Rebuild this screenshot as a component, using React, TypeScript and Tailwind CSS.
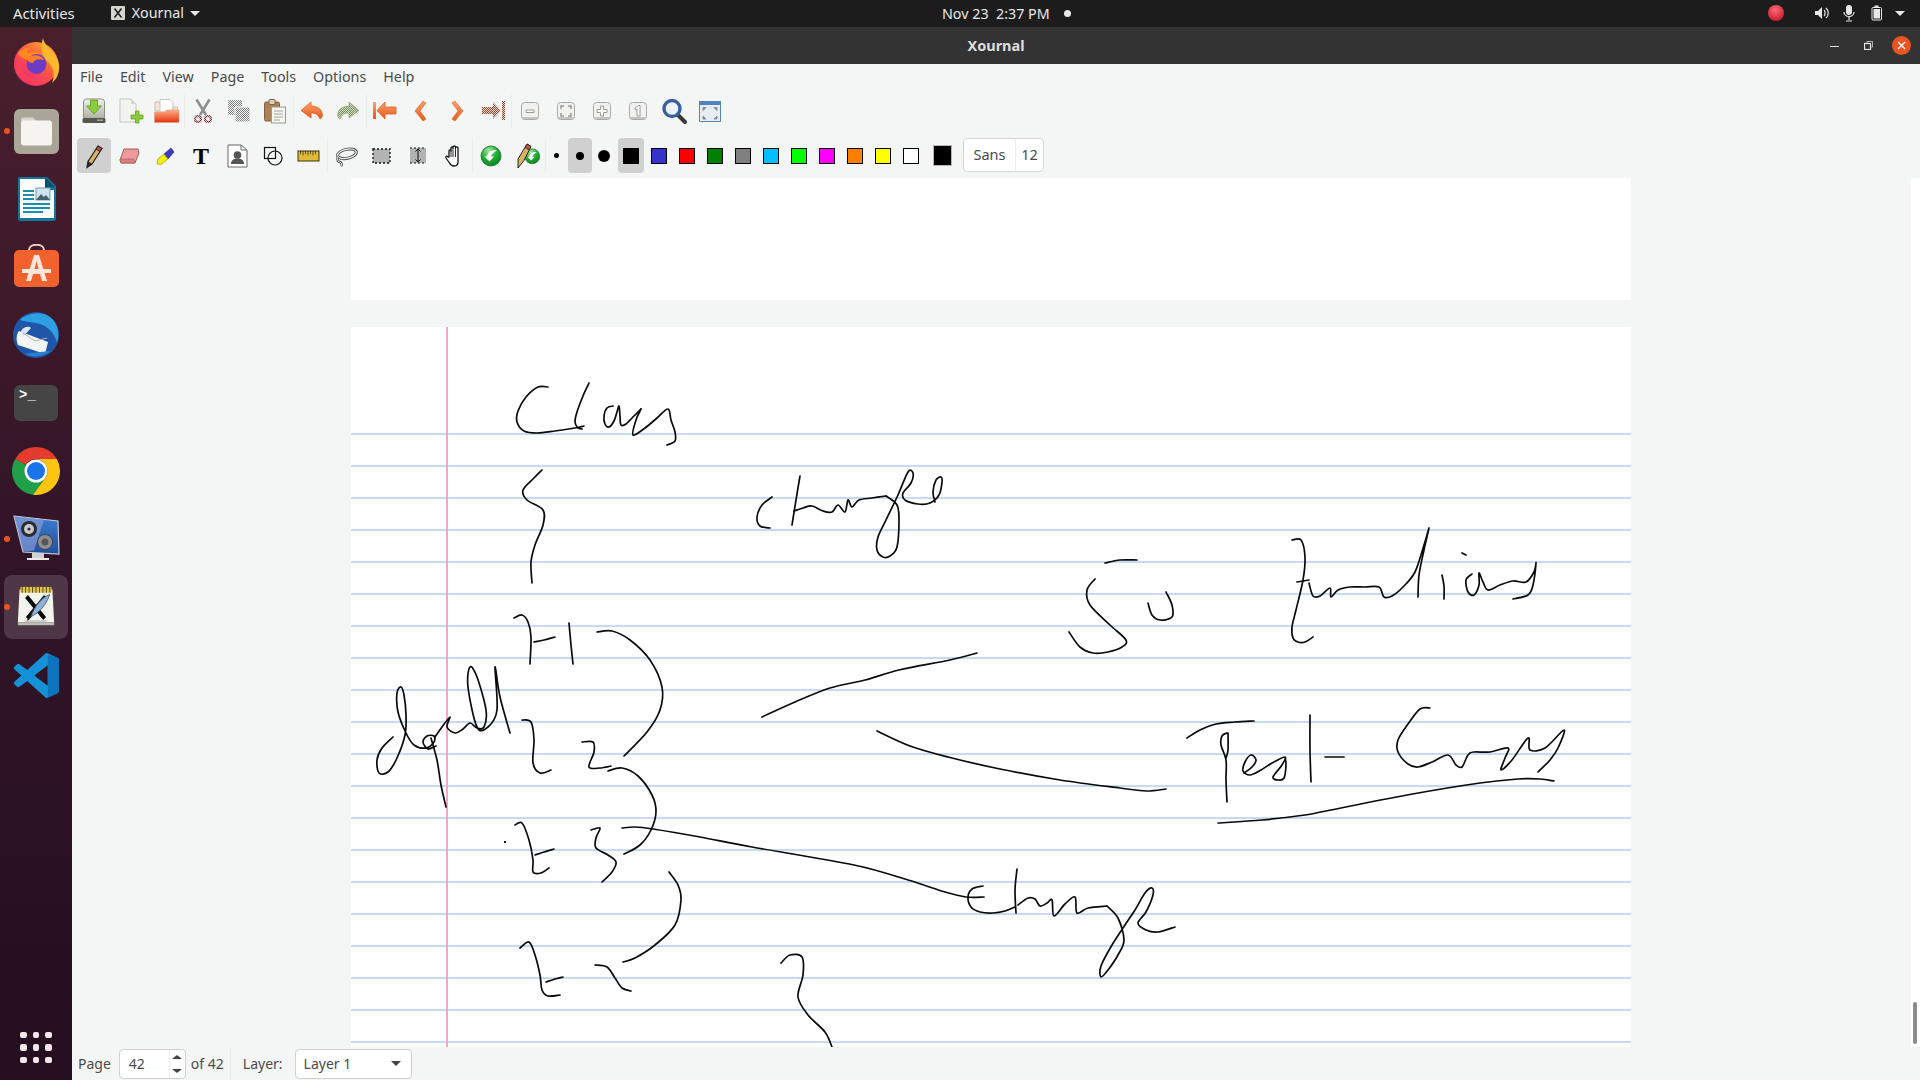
import type { ReactNode } from "react"

// handwriting: each stroke is a list of points in screen coordinates
const strokes = [
  // Class
  "548,387 538,387 526,397 518,411 517,422 524,431 537,433 555,431 575,428 584,426",
  "589,383 583,396 577,412 575,422 578,428 582,429",
  "613,406 607,408 604,416 605,424 609,427 614,421 617,412 619,406 620,416 621,425 626,424 634,416 641,409",
  "641,409 636,420 633,435 645,428 657,418 668,409 671,420 675,432 675,441 667,445",
  // {
  "542,470 534,478 523,490 527,500 543,510 543,525 535,545 531,562 532,583",
  // changes
  "772,497 762,505 757,517 760,526 770,528",
  "800,476 796,500 792,525",
  "794,511 803,508 812,506 823,511 832,512 838,505 845,512 848,500 852,507 859,500 872,498 886,496",
  "886,496 897,505 899,520 897,547 890,556 883,557 877,550 878,537 886,520 898,495 908,472 913,473 911,483 903,493 905,500 918,504 930,503 939,495 942,482 941,477 936,480 933,492 935,502",
  // f1
  "514,618 522,615 528,622 531,637 530,664",
  "534,642 544,640 555,637",
  "569,623 571,645 573,664",
  "597,632 612,631 630,640 650,660 662,687 660,710 647,732 624,756",
  // depend
  "393,737 382,748 377,760 379,773 388,772 397,758 405,735 406,715 404,695 401,687 397,693 398,712 406,733 414,745 426,748 434,742 434,736 427,736 423,742 428,749 436,746",
  "431,738 437,760 441,785 446,807",
  "435,737 442,727 450,717 447,727 455,733 463,729 470,723 477,728 484,727 486,710 477,677 470,667 468,687 477,727 488,727 497,710 495,667 500,697 510,733",
  // f2
  "522,720 531,722 534,740 533,763 540,773 551,770",
  "582,742 593,742 594,752 589,767 600,768 611,766",
  "608,771 622,768 638,776 652,795 656,812 651,830 640,845 624,854",
  // f3
  "515,825 522,823 529,840 533,860 533,872 541,873 549,868",
  "535,855 544,852 554,849",
  "591,830 600,828 596,838 596,848 608,855 616,862 612,872 602,882",
  "622,828 635,827 653,829 700,837 752,847 854,865 908,880 945,892 966,897 984,897",
  "669,872 678,885 681,900 675,925 655,945 635,958 623,962",
  // f4
  "520,948 529,942 535,955 540,975 542,990 548,996 560,995",
  "546,982 555,979 563,977",
  "595,965 607,967 615,978 622,988 631,991",
  // lower brace
  "781,963 790,955 802,957 803,975 798,997 808,1015 825,1032 832,1047",
  // connecting lines
  "762,717 795,702 830,688 865,680 899,670 950,660 977,653",
  "877,731 910,746 948,757 1000,769 1060,780 1120,788 1146,791 1166,789",
  // S u
  "1105,563 1120,560 1137,560",
  "1095,579 1087,590 1090,605 1110,625 1126,640 1122,647 1108,652 1093,653 1080,647 1069,632",
  "1148,603 1152,615 1160,620 1172,617 1172,605 1166,592",
  // function
  "1292,540 1301,540 1305,557 1303,580 1296,610 1292,627 1293,638 1298,642 1305,642 1313,637",
  "1297,582 1309,580",
  "1309,583 1313,596 1320,596 1330,588 1331,597 1338,590 1350,587 1365,587 1379,587 1384,597 1392,596 1403,587 1415,572 1424,545 1429,528 1424,550 1419,575 1418,597",
  "1442,575 1444,586 1444,599",
  "1462,553 1466,555",
  "1472,574 1466,580 1468,592 1474,595 1479,585 1479,573 1483,582 1488,590 1500,585 1513,581 1526,582 1534,572 1536,563 1533,585 1528,595 1513,599",
  // Test - Copy
  "1187,738 1200,730 1216,724 1235,722 1254,721",
  "1227,733 1222,736 1221,745 1226,760 1226,780 1227,802",
  "1228,733 1228,750 1226,758",
  "1244,773 1252,767 1256,760 1251,755 1245,762 1243,771 1250,775 1261,770 1272,763 1285,757 1282,765 1273,777 1278,780 1284,778 1286,765 1285,757",
  "1310,715 1310,750 1311,782",
  "1325,757 1344,757",
  "1430,708 1420,709 1408,724 1398,740 1398,752 1408,764 1418,767 1432,762 1448,755 1456,765 1462,767 1468,755 1474,752 1490,752 1508,748 1505,758 1501,770 1512,760 1528,738 1530,750 1545,748 1564,730 1558,748 1550,760 1538,772",
  "1218,823 1262,820 1305,815 1326,811 1407,795 1480,783 1518,779 1540,779 1554,781",
  // change
  "983,886 972,889 968,897 971,907 980,912 993,913 1005,911 1015,907",
  "1017,869 1015,890 1016,913",
  "1018,905 1028,898 1035,899 1040,906 1047,903 1052,900 1054,916 1065,904 1075,897 1077,913 1088,908 1107,906",
  "1107,906 1118,918 1124,940 1118,955 1108,970 1101,977 1101,966 1112,945 1125,925 1135,910 1145,893 1152,888 1153,895 1146,912 1138,923 1146,930 1158,932 1175,927",
]

function toPath(s: string) {
  const p = s.split(" ").map((q) => q.split(",").map(Number))
  let d = `M${p[0][0]} ${p[0][1]}`
  for (let i = 0; i < p.length - 1; i++) {
    const a = p[Math.max(i - 1, 0)]
    const b = p[i]
    const c = p[i + 1]
    const e = p[Math.min(i + 2, p.length - 1)]
    d += ` C${b[0] + (c[0] - a[0]) / 6} ${b[1] + (c[1] - a[1]) / 6} ${c[0] - (e[0] - b[0]) / 6} ${c[1] - (e[1] - b[1]) / 6} ${c[0]} ${c[1]}`
  }
  return d
}

const ruledLines = Array.from({ length: 20 }, (_, i) => 434 + i * 32)

function Page() {
  return (
    <div className="relative w-[1280px] h-[720px] bg-white shrink-0">
      <svg className="absolute inset-0" width="1280" height="720" viewBox="351 327 1280 720">
        {ruledLines.map((y) => (
          <line key={y} x1="351" x2="1631" y1={y} y2={y} stroke="#c6dbf0" strokeWidth="2" />
        ))}
        <line x1="447" x2="447" y1="327" y2="1047" stroke="#efa9c9" strokeWidth="2" />
        {strokes.map((s, i) => (
          <path key={i} d={toPath(s)} fill="none" stroke="#0a0a0a" strokeWidth="1.7" strokeLinecap="round" strokeLinejoin="round" />
        ))}
        <rect x="504" y="841" width="2" height="2" fill="#111" />
      </svg>
    </div>
  )
}

/* ---------- toolbar icons ---------- */

function Defs() {
  return (
    <svg width="0" height="0" className="absolute">
      <defs>
        <pattern id="dither" width="2" height="2" patternUnits="userSpaceOnUse">
          <rect width="2" height="2" fill="#fff" />
          <rect width="1" height="1" fill="#7d7d7d" />
          <rect x="1" y="1" width="1" height="1" fill="#7d7d7d" />
        </pattern>
        <pattern id="ditherBrown" width="2" height="2" patternUnits="userSpaceOnUse">
          <rect width="2" height="2" fill="#e8d9d0" />
          <rect width="1" height="1" fill="#8a4a32" />
          <rect x="1" y="1" width="1" height="1" fill="#8a4a32" />
        </pattern>
        <pattern id="ditherGreen" width="2" height="2" patternUnits="userSpaceOnUse">
          <rect width="2" height="2" fill="#cfd8bd" />
          <rect width="1" height="1" fill="#7d9464" />
          <rect x="1" y="1" width="1" height="1" fill="#7d9464" />
        </pattern>
        <pattern id="ditherRed" width="2" height="2" patternUnits="userSpaceOnUse">
          <rect width="2" height="2" fill="#ddc4c6" />
          <rect width="1" height="1" fill="#8a2f3a" />
          <rect x="1" y="1" width="1" height="1" fill="#8a2f3a" />
        </pattern>
        <linearGradient id="orangeArrow" x1="0" y1="0" x2="0" y2="1">
          <stop offset="0" stopColor="#fba36a" />
          <stop offset="1" stopColor="#e8581c" />
        </linearGradient>
        <linearGradient id="redFolder" x1="0" y1="0" x2="0" y2="1">
          <stop offset="0" stopColor="#ffb084" />
          <stop offset="1" stopColor="#e4300f" />
        </linearGradient>
        <linearGradient id="disk" x1="0" y1="0" x2="0" y2="1">
          <stop offset="0" stopColor="#f1f1ec" />
          <stop offset="1" stopColor="#a9aca2" />
        </linearGradient>
        <radialGradient id="greenBall" cx="0.4" cy="0.25" r="0.85">
          <stop offset="0" stopColor="#a5eba5" />
          <stop offset="0.45" stopColor="#28b03a" />
          <stop offset="1" stopColor="#06741a" />
        </radialGradient>
        <radialGradient id="redBall" cx="0.45" cy="0.3" r="0.8">
          <stop offset="0" stopColor="#ff6b70" />
          <stop offset="1" stopColor="#c4122c" />
        </radialGradient>
        <linearGradient id="ffBody" x1="1" y1="0" x2="0.2" y2="1">
          <stop offset="0" stopColor="#ffbd2e" />
          <stop offset="0.5" stopColor="#ff5a3c" />
          <stop offset="1" stopColor="#e91e8c" />
        </linearGradient>
        <linearGradient id="dock" x1="0" y1="0" x2="0" y2="1">
          <stop offset="0" stopColor="#3f7fd0" />
          <stop offset="1" stopColor="#1e4f9f" />
        </linearGradient>
      </defs>
    </svg>
  )
}

const box = "w-[26px] h-[26px]"

function Save() {
  return (
    <svg className="w-[28px] h-[28px]" viewBox="0 0 28 28">
      <rect x="3.500" y="2" width="21" height="21" rx="3" fill="url(#disk)" stroke="#8d8f88" />
      <rect x="2.500" y="21" width="23" height="5" rx="1.500" fill="#55564f" />
      <rect x="17" y="22.500" width="6" height="1.400" fill="#a9ad9f" />
      <path d="M10.500 3h7v6h4L14 17 6.500 9h4z" fill="#8ccb3c" stroke="#5b9a1c" strokeWidth="0.8" />
    </svg>
  )
}

function NewDoc() {
  return (
    <svg className="w-[28px] h-[28px]" viewBox="0 0 28 28">
      <path d="M4 2h11l5 5v18H4z" fill="#f3f3f0" stroke="#c6c6c1" />
      <path d="M15 2v5h5z" fill="#d8d8d3" />
      <path d="M15 15h4.500v-4h3.500v4H27v4h-4v4h-3.500v-4H15z" transform="translate(0 3)" fill="#8ccb3c" stroke="#5b9a1c" strokeWidth="0.7" />
    </svg>
  )
}

function OpenDoc() {
  return (
    <svg className="w-[28px] h-[28px]" viewBox="0 0 28 28">
      <path d="M3 5h7l1 1v8H3z" fill="#f0e4d4" stroke="#c9b9a4" />
      <path d="M8 2.500h10l3 3V15H8z" fill="#fff" stroke="#c6c6c1" />
      <path d="M21 10h4.500v6H21z" fill="#f0dccb" stroke="#cdb39e" strokeWidth="0.6" />
      <path d="M2.500 25.500V15h10l2-2h12.500v12.500z" fill="url(#redFolder)" stroke="#d9a48a" strokeWidth="0.6" />
    </svg>
  )
}

function Cut() {
  return (
    <svg className={box} viewBox="0 0 26 26" fill="none">
      <path d="M6.500 1.500 16 17M19.500 1.500 10 17" stroke="#8f8f8f" strokeWidth="2.600" />
      <circle cx="8" cy="21" r="3" stroke="url(#ditherRed)" strokeWidth="2.200" />
      <circle cx="18" cy="21" r="3" stroke="url(#ditherRed)" strokeWidth="2.200" />
    </svg>
  )
}

function Copy() {
  return (
    <svg className={box} viewBox="0 0 26 26">
      <rect x="2" y="2" width="14" height="15" rx="1" fill="url(#dither)" />
      <rect x="9" y="9" width="15" height="15" rx="1" fill="url(#dither)" stroke="#f4f6f6" />
    </svg>
  )
}

function Paste() {
  return (
    <svg className={box} viewBox="0 0 26 26">
      <rect x="2.500" y="4" width="15" height="19" rx="1.500" fill="#ab8258" stroke="#83603f" />
      <rect x="7" y="1.500" width="6" height="5" rx="1" fill="#d6d3c8" stroke="#83603f" />
      <rect x="9.500" y="9" width="14" height="16" fill="#f5f5f2" stroke="#9a9a94" />
      <path d="M12 13h9M12 16h9M12 19h9M12 22h6" stroke="#a4a4a0" />
    </svg>
  )
}

const undoPath = "M12 3 2 11.500 12 19v-5c5 0 7 2 9 6 2-1 3-3 2-6-1-5-6-7-11-7z"

function Undo({ off }: { off?: boolean }) {
  return (
    <svg className={box} viewBox="0 0 26 24" style={off ? { transform: "scaleX(-1)" } : undefined}>
      <path d={undoPath} fill={off ? "url(#ditherGreen)" : "url(#orangeArrow)"} stroke={off ? "#9aac82" : "#d9632a"} strokeWidth="0.8" />
    </svg>
  )
}

function First() {
  return (
    <svg className={box} viewBox="0 0 26 24">
      <path d="M1 3h3v17H1z" fill="url(#orangeArrow)" />
      <path d="M13 3 5 11.500 13 20v-5h11V8H13z" fill="url(#orangeArrow)" stroke="#d9632a" strokeWidth="0.8" />
    </svg>
  )
}

function Last() {
  return (
    <svg className={box} viewBox="0 0 26 24">
      <path d="M22 2h3v19h-3z" fill="url(#ditherBrown)" />
      <path d="M13 3l8 8.500L13 20v-5H2V8h11z" fill="url(#ditherBrown)" />
    </svg>
  )
}

function Chevron({ left }: { left?: boolean }) {
  return (
    <svg className={box} viewBox="0 0 26 24" style={left ? undefined : { transform: "scaleX(-1)" }}>
      <path d="M15 2 7 12l8 10 3-2-6-8 6-8z" fill="url(#orangeArrow)" stroke="#d9632a" strokeWidth="0.6" />
    </svg>
  )
}

function ZoomBox({ children }: { children: ReactNode }) {
  return (
    <svg className={box} viewBox="0 0 26 26">
      <rect x="4.500" y="4.500" width="17" height="17" rx="3" fill="#f1f1f0" stroke="#a8a8a6" />
      <path d="M5 20h16" stroke="#c4c4c2" strokeWidth="2" />
      {children}
    </svg>
  )
}

function Magnifier() {
  return (
    <svg className="w-[28px] h-[28px]" viewBox="0 0 28 28">
      <path d="M18 18l7 7" stroke="#3a3a3a" strokeWidth="4" strokeLinecap="round" />
      <circle cx="12" cy="11.500" r="8" fill="#eef3fa" stroke="#3a5f9f" strokeWidth="3.400" />
    </svg>
  )
}

function Fullscreen() {
  return (
    <svg className="w-[26px] h-[26px]" viewBox="0 0 26 26">
      <rect x="2.500" y="3.500" width="21" height="20" fill="#e6edf5" stroke="#5b84b8" />
      <rect x="2.500" y="3.500" width="21" height="3.500" fill="#4f82c4" />
      <path d="M6 9.500h3l-3 3zM20 9.500h-3l3 3zM6 21h3l-3-3zM20 21h-3l3-3z" fill="#8d8d8d" stroke="#8d8d8d" />
    </svg>
  )
}

function Pen() {
  return (
    <svg className={box} viewBox="0 0 26 26">
      <path d="M17 3l4 2.500-10 15.500-5 3.500 1-6z" fill="#d9b35f" stroke="#222" strokeWidth="1.200" />
      <path d="M17 3l4 2.500-2 3-4-2.500z" fill="#c0504d" stroke="#222" strokeWidth="1" />
      <path d="M7 18l4 3-5 3.500z" fill="#222" />
    </svg>
  )
}

function Eraser() {
  return (
    <svg className={box} viewBox="0 0 26 26">
      <path d="M8 6h14l1 4-4 10H5l-1-3z" fill="#ee9a9d" stroke="#98605f" />
      <path d="M4 16h13.500L19 20H5z" fill="#dc7d80" stroke="#98605f" strokeWidth="0.6" />
    </svg>
  )
}

function Highlighter() {
  return (
    <svg className={box} viewBox="0 0 26 26">
      <path d="M12 11l7-6 3 4-6 7z" fill="#3c3cc4" stroke="#22227a" strokeWidth="0.6" />
      <path d="M12 11l4 5-7 5.500-4-.5 1-5z" fill="#f5f200" stroke="#8a8a10" strokeWidth="0.6" />
    </svg>
  )
}

function ImageTool() {
  return (
    <svg className="w-[24px] h-[26px]" viewBox="0 0 24 26">
      <path d="M3 2h13l6 5v17H3z" fill="#fff" stroke="#666" />
      <path d="M16 2v5h6" fill="none" stroke="#666" />
      <circle cx="12.500" cy="12" r="3.800" fill="#555" />
      <path d="M6 21c0-4 3-5.500 6.500-5.500S19 17 19 21z" fill="#555" />
    </svg>
  )
}

function Shapes() {
  return (
    <svg className={box} viewBox="0 0 26 26" fill="none" stroke="#111" strokeWidth="1.200">
      <rect x="4.500" y="4.500" width="11" height="11" />
      <circle cx="15" cy="15" r="7" />
    </svg>
  )
}

function Ruler() {
  return (
    <svg className="w-[24px] h-[26px]" viewBox="0 0 24 26">
      <rect x="1" y="8" width="21" height="10" fill="#dfb93b" stroke="#3d3412" />
      <path d="M3.500 8v3M6 8v4.500M8.500 8v3M11 8v4.500M13.500 8v3M16 8v4.500M18.500 8v3" stroke="#3d3412" strokeWidth="0.8" />
    </svg>
  )
}

function Lasso() {
  return (
    <svg className={box} viewBox="0 0 26 26" fill="none">
      <g transform="rotate(-12 13 11)">
        <ellipse cx="14" cy="11" rx="9.500" ry="4.500" stroke="#4d4d4d" strokeWidth="3" />
        <ellipse cx="14" cy="11" rx="9.500" ry="4.500" stroke="#eeeeee" strokeWidth="1.200" />
      </g>
      <path d="M5 14c-1 3 0 5 2 5 2 1 2 3 1 4" stroke="#4d4d4d" strokeWidth="2.600" />
      <path d="M5 14c-1 3 0 5 2 5 2 1 2 3 1 4" stroke="#eeeeee" strokeWidth="1" />
    </svg>
  )
}

function RectSelect() {
  return (
    <svg className={box} viewBox="0 0 26 26">
      <rect x="4" y="6" width="17" height="14" fill="#b3b3b3" stroke="#111" strokeWidth="1.300" strokeDasharray="2 2" />
    </svg>
  )
}

function VerticalSpace() {
  return (
    <svg className={box} viewBox="0 0 26 26">
      <rect x="5" y="5" width="16" height="15" fill="#b3b3b3" />
      <path d="M5 5h16M5 20h16" stroke="#111" strokeWidth="1.200" strokeDasharray="2 2" />
      <path d="M13 6v13M10.500 8.500 13 6l2.500 2.500M10.500 16.500 13 19l2.500-2.500" fill="none" stroke="#111" strokeWidth="1" />
    </svg>
  )
}

function Hand() {
  return (
    <svg className={box} viewBox="0 0 26 26">
      <path d="M8 14V8c0-1.500 2-1.500 2 0V5c0-1.500 2-1.500 2 0V4c0-1.500 2.500-1.500 2.500 0v1c0-1.500 2.500-1.500 2.500 0v14c0 2-1 4-4 4-2 0-3.500-1-4.500-3L5 15c-.6-1.500 1-2.500 2-1z" fill="#fff" stroke="#111" strokeWidth="1.300" strokeLinejoin="round" />
      <path d="M10 8v6M12 5v9M14.500 5v9" stroke="#111" strokeWidth="0.9" />
    </svg>
  )
}

function GreenRefresh() {
  return (
    <>
      <circle cx="13" cy="13" r="10" fill="url(#greenBall)" stroke="#0b7a1d" strokeWidth="0.8" />
      <path d="M19 7.500C14 6.500 9.500 9 9 13.500H6.500l5 5 4.500-5h-3c.5-2.500 2.500-4.500 6-6z" fill="#fff" />
    </>
  )
}

function Refresh() {
  return (
    <svg className={box} viewBox="0 0 26 26">
      <GreenRefresh />
    </svg>
  )
}

function PenRefresh() {
  return (
    <svg className={box} viewBox="0 0 26 26">
      <g transform="translate(8.500 3.500) scale(0.75)">
        <GreenRefresh />
      </g>
      <path d="M13 1l4 2.500-7 14-6 7.500 0-9z" fill="#d9b35f" stroke="#222" />
      <path d="M13 1l4 2.500-2 3.500-4-2.500z" fill="#c0504d" stroke="#222" strokeWidth="0.7" />
    </svg>
  )
}

const btn = "w-9 h-[35px] flex items-center justify-center shrink-0"
const sep = "w-px h-[35px] bg-[#eceeee] shrink-0"

const swatches = ["#3333cc", "#ff0000", "#008000", "#808080", "#00c0ff", "#00ff00", "#ff00ff", "#ff8000", "#ffff00", "#ffffff"]

function Toolbars() {
  return (
    <>
      <div className="h-[42px] flex items-center pl-1 pt-[4px]">
        <div className={btn}><Save /></div>
        <div className={btn}><NewDoc /></div>
        <div className={btn}><OpenDoc /></div>
        <div className={sep} />
        <div className={btn}><Cut /></div>
        <div className={btn}><Copy /></div>
        <div className={btn}><Paste /></div>
        <div className={sep} />
        <div className={btn}><Undo /></div>
        <div className={btn}><Undo off /></div>
        <div className={sep} />
        <div className={btn}><First /></div>
        <div className={btn}><Chevron left /></div>
        <div className={btn}><Chevron /></div>
        <div className={btn}><Last /></div>
        <div className={sep} />
        <div className={btn}>
          <ZoomBox><path d="M9 12h8v2.500H9z" fill="#fff" stroke="#9a9a98" /></ZoomBox>
        </div>
        <div className={btn}>
          <ZoomBox>
            <path d="M8 11V8h3M15 8h3v3M18 15v3h-3M11 18H8v-3" fill="none" stroke="#9a9a98" strokeWidth="1.500" />
          </ZoomBox>
        </div>
        <div className={btn}>
          <ZoomBox><path d="M11.500 8h3v3.500H18v3h-3.500V18h-3v-3.500H8v-3h3.500z" fill="#fff" stroke="#9a9a98" /></ZoomBox>
        </div>
        <div className={btn}>
          <ZoomBox><path d="M10 10l3.500-2.500h1.500V18h-3v-7l-1.500 1z" fill="#fff" stroke="#9a9a98" /></ZoomBox>
        </div>
        <div className={btn}><Magnifier /></div>
        <div className={btn}><Fullscreen /></div>
      </div>

      <div className="h-[48px] flex items-start pt-2 pl-[3px]">
        <div className="w-[34px] h-[35px] ml-[2px] mr-0 flex items-center justify-center shrink-0 bg-[#d0d0d0] rounded"><Pen /></div>
        <div className={btn}><Eraser /></div>
        <div className={btn}><Highlighter /></div>
        <div className={`${btn} [font-family:'Liberation_Serif',serif] font-bold text-[24px] text-black`}>T</div>
        <div className={btn}><ImageTool /></div>
        <div className={btn}><Shapes /></div>
        <div className={btn}><Ruler /></div>
        <div className={sep} />
        <div className={btn}><Lasso /></div>
        <div className={btn}><RectSelect /></div>
        <div className={btn}><VerticalSpace /></div>
        <div className={btn}><Hand /></div>
        <div className={sep} />
        <div className={btn}><Refresh /></div>
        <div className={btn}><PenRefresh /></div>
        <div className={sep} />
        <div className="w-[24px] h-[35px] flex items-center justify-center -ml-[2px]">
          <span className="w-[5px] h-[5px] rounded-full bg-black" />
        </div>
        <div className="w-[24px] h-[35px] flex items-center justify-center bg-[#d0d0d0] rounded">
          <span className="w-[8px] h-[8px] rounded-full bg-black" />
        </div>
        <div className="w-[24px] h-[35px] flex items-center justify-center">
          <span className="w-[12px] h-[12px] rounded-full bg-black" />
        </div>
        <div className="w-[26px] h-[35px] ml-[2px] mr-px flex items-center justify-center bg-[#d0d0d0] rounded">
          <span className="w-4 h-4 bg-black" />
        </div>
        {swatches.map((c) => (
          <div key={c} className="w-[28px] h-[35px] flex items-center justify-center">
            <span className="w-4 h-4 border border-black" style={{ backgroundColor: c }} />
          </div>
        ))}
        <div className="w-[34px] h-[35px] flex items-center justify-center">
          <span className="w-[19px] h-[21px] bg-black border border-[#b9b9b9]" />
        </div>
        <div className="ml-[4px] w-[81px] h-[34px] flex items-center bg-white border border-[#d6d8d8] rounded text-[#4a4a4a] text-[14.500px]">
          <span className="w-[52px] h-full flex items-center justify-center border-r border-[#eeeeee]">Sans</span>
          <span className="flex-1 text-center">12</span>
        </div>
      </div>
    </>
  )
}

/* ---------- dock ---------- */

function Firefox() {
  return (
    <svg className="w-[48px] h-[48px] -translate-y-[1px]" viewBox="0 0 48 48">
      <circle cx="24" cy="26" r="22" fill="url(#ffBody)" />
      <path d="M31 0c1 8 11 13 15 22 3 9 0 18-6 23 3-8 2-15-4-21-6-5-8-15-5-24z" fill="#ffb92e" />
      <path d="M6 16c3-5 7-6 11-6-2 2-2 4-1 5 4-2 10-1 13 2l-8 5c-5 1-10-1-15-6z" fill="#ff8a1e" />
      <circle cx="24.500" cy="26" r="10" fill="#6d3cc4" />
      <path d="M14 20c5-3 14-5 18 2-6-2-10 0-11 3-3 0-6-2-7-5z" fill="#ff7b24" />
      <path d="M2 25c0 12 10 22 22 22 8 0 15-5 18-11-5 5-13 7-20 5-8-2-13-8-13-15-2 1-5 0-7-1z" fill="#ff4b45" opacity="0.55" />
    </svg>
  )
}

function Files() {
  return (
    <svg className="w-[45px] h-[45px]" viewBox="0 0 45 45">
      <rect width="45" height="45" rx="6" fill="#aba597" />
      <path d="M7 11c0-1.500 1-2.500 2.500-2.500H19l3.500 3.500H7z" fill="#d8d5cc" />
      <path d="M7 14c0-1.500 1-2.500 2.500-2.500h26c1.500 0 2.500 1 2.500 2.500v20c0 1.500-1 2.500-2.500 2.500h-26C8 36.500 7 35.500 7 34z" fill="#f6f4f0" />
    </svg>
  )
}

function Writer() {
  return (
    <svg className="w-[46px] h-[46px]" viewBox="2 0 46 46">
      <path d="M7 3c0-1.500 1-2 2-2h27l9 9v32c0 2-1 3-3 3H9c-1 0-2-1-2-3z" fill="#12769c" />
      <path d="M9 3h25v11h9v28H9z" fill="#fff" />
      <path d="M34 1l10 10-10 .500z" fill="#0f4f6e" />
      <path d="M12 15h11M12 19h11M12 23h11M12 28h27M12 32h27M12 36h20" stroke="#1b8cb0" strokeWidth="2.200" />
      <rect x="25" y="12" width="14" height="12" fill="#cfe3ee" stroke="#6b9fb5" />
      <path d="M25 24l5-6 3 3 2-2 4 5z" fill="#47606e" />
    </svg>
  )
}

function Software() {
  return (
    <svg className="w-[45px] h-[43px] -translate-y-[2px]" viewBox="0 0 45 43">
      <path d="M15 7V6c0-7 15-7 15 0v1" fill="none" stroke="#f6d1bd" strokeWidth="2" />
      <rect y="6" width="45" height="37" rx="5" fill="#f2622e" />
      <path d="M20 11h5l8 26h-5l-2-7h-7l-2 7h-5z" fill="#fbe4d8" />
      <rect x="8" y="25" width="29" height="4" fill="#fbe4d8" />
      <path d="M22.500 17l-2 8h4z" fill="#f2622e" />
    </svg>
  )
}

function Thunderbird() {
  return (
    <svg className="w-[50px] h-[48px]" viewBox="0 0 50 48">
      <circle cx="25" cy="24" r="23" fill="#1f56a8" />
      <path d="M9 9c6-6 20-10 30-3 8 6 10 17 7 26-2-9-8-16-17-19-7-2-14-2-20-4z" fill="#2f9fe4" />
      <path d="M8 20l29 11-3 12-27-9c-2-5-2-10 1-14z" fill="#f4f4f6" />
      <path d="M10 20c3-5 8-5 10-3l-8 9z" fill="#dfe3ea" />
      <path d="M12 22l12 8 12-3" fill="none" stroke="#aeb4c0" strokeWidth="1" />
      <path d="M14 43c8 4 18 3 26-3-8 1-16 1-26 3z" fill="#2b7fd0" />
    </svg>
  )
}

function Chrome() {
  return (
    <svg className="w-[48px] h-[48px]" viewBox="0 0 48 48">
      <path d="M3.200 12A24 24 0 0 1 44.800 12L24 12A12 12 0 0 0 13.600 18Z" fill="#e33b2e" />
      <path d="M3.200 12A24 24 0 0 0 21 47.800L34 30A12 12 0 0 1 13.600 18Z" fill="#1fa049" />
      <path d="M44.800 12A24 24 0 0 1 21 47.800L34 30A12 12 0 0 0 24 12Z" fill="#fdc50d" />
      <circle cx="24" cy="24" r="11.500" fill="#fff" />
      <circle cx="24" cy="24" r="9" fill="#1a73e8" />
    </svg>
  )
}

function VideoEditor() {
  return (
    <svg className="w-[48px] h-[48px]" viewBox="0 0 48 48">
      <path d="M2 1l44 5 1 33-36-2z" fill="url(#dock)" stroke="#c9c9d4" strokeWidth="1.200" />
      <path d="M2 1l30 3.500-10 31-11 1z" fill="#8ea0d8" opacity="0.65" />
      <circle cx="17" cy="14" r="8" fill="#2c2c30" />
      <circle cx="17" cy="14" r="5" fill="#c9cad0" />
      <circle cx="17" cy="14" r="1.600" fill="#2c2c30" />
      <circle cx="33" cy="27" r="7.500" fill="#8d8f95" stroke="#444" />
      <circle cx="33" cy="27" r="3.500" fill="#55565c" />
      <path d="M20 38h12v5H20z" fill="#cfd0d4" />
      <path d="M15 43h22v2H15z" fill="#e8e8e8" />
    </svg>
  )
}

function XournalIcon() {
  return (
    <svg className="w-[38px] h-[42px]" viewBox="0 0 44 44" preserveAspectRatio="none">
      <path d="M3 4h38l2 34H1z" fill="#f4f4ee" />
      <path d="M1 38h42v3H1z" fill="#bdbdb8" />
      <path d="M8 36h28l-3 2H11z" fill="#c9c9c4" />
      <path d="M4 1h36v6H4z" fill="#e4c54a" />
      <path d="M6 0v7M10 0v7M14 0v7M18 0v7M22 0v7M26 0v7M30 0v7M34 0v7M38 0v7" stroke="#55501f" strokeWidth="1.200" />
      <path d="M11 11l21 23M33 11 12 34" stroke="#0a0a0a" strokeWidth="4.500" />
      <path d="M38 9C28 12 20 22 16 32c8-3 16-9 22-23z" fill="#8fb0d4" stroke="#2d4a70" strokeWidth="0.8" />
      <path d="M16 32l-4 4" stroke="#1b2c46" strokeWidth="1.500" />
    </svg>
  )
}

function VSCode() {
  return (
    <svg className="w-[45px] h-[45px]" viewBox="0 0 24 24">
      <path d="M23.150 2.587 18.210.21a1.494 1.494 0 0 0-1.705.29l-9.460 8.630-4.120-3.128a.999.999 0 0 0-1.276.057L.327 7.261A1 1 0 0 0 .326 8.740L3.899 12 .326 15.260a1 1 0 0 0 .001 1.479L1.650 17.940a.999.999 0 0 0 1.276.057l4.120-3.128 9.460 8.630a1.492 1.492 0 0 0 1.704.290l4.942-2.377A1.500 1.500 0 0 0 24 20.060V3.939a1.500 1.500 0 0 0-.850-1.352zm-5.146 14.861L10.826 12l7.178-5.448v10.896z" fill="#1591d8" />
      <path d="M18.004 0a1.500 1.500 0 0 1 .206.210l4.940 2.377A1.500 1.500 0 0 1 24 3.939v16.120a1.500 1.500 0 0 1-.850 1.353l-4.940 2.377a1.500 1.500 0 0 1-.206.080z" fill="#0d73bd" />
    </svg>
  )
}

const dockItems = [
  { icon: <Firefox /> },
  { icon: <Files />, running: true },
  { icon: <Writer /> },
  { icon: <Software /> },
  { icon: <Thunderbird /> },
  {
    icon: (
      <div className="w-[44px] h-[36px] rounded-md bg-[#454545] text-white text-[14px] leading-none pl-[5px] pt-[3px] [font-family:'Liberation_Mono',monospace] font-bold">
        {">_"}
      </div>
    ),
  },
  { icon: <Chrome /> },
  { icon: <VideoEditor />, running: true },
  { icon: <XournalIcon />, running: true, active: true },
  { icon: <VSCode /> },
]

function Dock() {
  return (
    <div className="w-[72px] shrink-0 flex flex-col pt-[2px] bg-gradient-to-b from-[#4a1f2c] via-[#321428] to-[#240e1f]">
      {dockItems.map((item, i) => (
        <div key={i} className="relative h-[68px] flex items-center justify-center">
          {item.active && <div className="absolute left-1 top-[2px] w-16 h-16 rounded-lg bg-white/15" />}
          {item.running && <span className="absolute left-[4px] top-[31px] w-[6px] h-[6px] rounded-full bg-[#e95420]" />}
          <div className="relative flex items-center justify-center">{item.icon}</div>
        </div>
      ))}
      <div className="mt-auto mb-[17px] mx-auto grid grid-cols-3 gap-[6px]">
        {Array.from({ length: 9 }, (_, i) => (
          <span key={i} className="w-[6.500px] h-[6.500px] rounded-[2px] bg-[#f5e6ec]" />
        ))}
      </div>
    </div>
  )
}

function TopBar() {
  return (
    <div className="h-[27px] shrink-0 bg-[#1c1c1c] text-[#e8e8e8] text-[14.300px] relative flex items-center pb-px">
      <span className="ml-[13px] text-[14.800px]">Activities</span>
      <div className="ml-[36px] flex items-center">
        <svg width="14" height="14" viewBox="0 0 14 14" className="mr-[7px]">
          <rect width="14" height="14" rx="1" fill="#d6d6d0" />
          <path d="M3.500 2.500l7 9M10.500 2.500l-7 9" stroke="#222" strokeWidth="1.600" />
        </svg>
        <span>Xournal</span>
        <span className="ml-[6px] w-0 h-0 border-x-[5px] border-x-transparent border-t-[5px] border-t-[#e8e8e8]" />
      </div>
      <div className="absolute left-[942px] top-0 h-full flex items-center whitespace-pre">
        Nov 23  2:37 PM
        <span className="ml-[14px] w-[7px] h-[7px] rounded-full bg-[#e8e8e8]" />
      </div>
      <div className="ml-auto mr-[15px] flex items-center">
        <svg width="18" height="18" viewBox="0 0 18 18" className="mr-[29px]">
          <circle cx="9" cy="9" r="8" fill="url(#redBall)" />
        </svg>
        <svg width="16" height="16" viewBox="0 0 16 16" className="mr-[12px]" fill="#e8e8e8">
          <path d="M1 6v4h3l4 4V2L4 6z" />
          <path d="M10 5c1.500 1.500 1.500 4.500 0 6M12 3c3 2.500 3 7.500 0 10" fill="none" stroke="#e8e8e8" strokeWidth="1.200" />
        </svg>
        <svg width="14" height="18" viewBox="0 0 14 18" className="mr-[15px]" fill="#e8e8e8">
          <rect x="4" y="1" width="6" height="10" rx="3" />
          <path d="M2 8c0 6 10 6 10 0M7 13v3M4 17h6" fill="none" stroke="#e8e8e8" strokeWidth="1.200" />
        </svg>
        <svg width="12" height="16" viewBox="0 0 12 16" className="mr-[12px]" fill="none">
          <rect x="1" y="2.500" width="9.500" height="12.500" rx="1" stroke="#e8e8e8" />
          <rect x="2.500" y="4" width="6.500" height="9.500" fill="#e8e8e8" />
          <rect x="3.500" y="0.500" width="4" height="2" fill="#e8e8e8" />
        </svg>
        <span className="w-0 h-0 border-x-[5px] border-x-transparent border-t-[5px] border-t-[#e8e8e8]" />
      </div>
    </div>
  )
}

function TitleBar() {
  return (
    <div className="h-[37px] shrink-0 bg-[#333333] relative flex items-center justify-center text-[#dedede] text-[14.500px] font-bold">
      <span>Xournal</span>
      <div className="absolute right-[9px] top-[9px] flex items-center">
        <span className="w-[9px] h-px bg-[#e6e6e6] mr-[25px] mt-[2px]" />
        <svg width="9" height="9" viewBox="0 0 9 9" className="mr-[19px]" fill="none" stroke="#e6e6e6">
          <rect x="0.500" y="2.500" width="6" height="6" strokeWidth="1.200" />
          <path d="M3 2V.5h5.500V6H7" strokeWidth="0.700" />
        </svg>
        <span className="w-[19px] h-[19px] rounded-full bg-[#e95420] flex items-center justify-center">
          <svg width="9" height="9" viewBox="0 0 9 9" stroke="#fff" strokeWidth="1.400">
            <path d="M1 1l7 7M8 1 1 8" />
          </svg>
        </span>
      </div>
    </div>
  )
}

function StatusBar() {
  return (
    <div className="h-[33px] shrink-0 flex items-center pl-[6px] text-[14px] text-[#4a4a4a]">
      <span>Page</span>
      <div className="ml-2 w-[67px] h-[30px] bg-white border border-[#cfd2d2] rounded flex items-center">
        <span className="pl-[9px] flex-1">42</span>
        <div className="w-4 h-full border-l border-[#eeeeee] flex flex-col items-center justify-center gap-[10px]">
          <span className="w-0 h-0 border-x-[5px] border-x-transparent border-b-[4px] border-b-[#444]" />
          <span className="w-0 h-0 border-x-[5px] border-x-transparent border-t-[4px] border-t-[#444]" />
        </div>
      </div>
      <span className="ml-[5px]">of 42</span>
      <span className="ml-[6px] w-px h-full bg-[#eceeee]" />
      <span className="ml-3">Layer:</span>
      <div className="ml-3 w-[117px] h-[30px] bg-white border border-[#cfd2d2] rounded flex items-center justify-between pl-[8px] pr-[10px]">
        <span>Layer 1</span>
        <span className="w-0 h-0 border-x-[5px] border-x-transparent border-t-[5px] border-t-[#444]" />
      </div>
    </div>
  )
}

export default function App() {
  return (
    <div className="w-[1920px] h-[1080px] overflow-hidden flex flex-col [font-family:'Noto_Sans',sans-serif]">
      <Defs />
      <TopBar />
      <div className="flex flex-1 min-h-0">
        <Dock />
        <div className="flex-1 min-w-0 flex flex-col bg-[#f4f6f6]">
          <TitleBar />
          <div className="h-[24px] shrink-0 flex items-center gap-[17px] pl-2 pt-px text-[14.300px] text-[#4a4a4a]">
            {["File", "Edit", "View", "Page", "Tools", "Options", "Help"].map((m) => (
              <span key={m}>{m}</span>
            ))}
          </div>
          <Toolbars />
          <div className="h-[869px] shrink-0 flex">
            <div className="flex-1 min-w-0 pl-[279px] flex flex-col overflow-hidden">
              <div className="w-[1280px] h-[122px] bg-white shrink-0" />
              <div className="h-[27px] shrink-0" />
              <Page />
            </div>
            <div className="w-[9px] shrink-0 bg-white relative">
              <div className="absolute left-[2px] bottom-[3px] w-1 h-[42px] rounded-full bg-[#8c8c8c]" />
            </div>
          </div>
          <StatusBar />
        </div>
      </div>
    </div>
  )
}
